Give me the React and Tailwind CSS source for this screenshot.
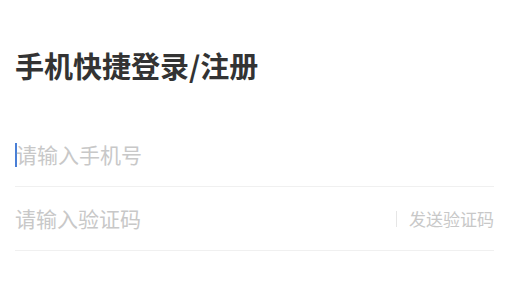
import React from 'react';

const App = () => {
    return (
        <div
            className="w-[511px] h-[284px] bg-white pl-[15px] pr-[17px] overflow-hidden"
            style={{ fontFamily: '"Noto Sans CJK SC", "Noto Sans", sans-serif' }}
        >
            {/* Title */}
            <h1 className="pt-[42px] text-[29px] leading-[46px] font-bold text-[#333333]">
                手机快捷登录/注册
            </h1>

            {/* Phone */}
            <div className="mt-[35px] h-[64px] flex items-center border-b border-[#f0f0f0]">
                <span className="w-[2px] h-[24px] bg-[#4a7fd6] -mr-[1px]" />
                <span className="text-[21px] text-[#c8c8c8]">请输入手机号</span>
            </div>

            {/* Code */}
            <div className="h-[64px] flex items-center border-b border-[#f0f0f0]">
                <span className="flex-1 text-[21px] text-[#c8c8c8]">请输入验证码</span>
                <span className="w-px h-[16px] bg-[#e6e6e6] mr-[12px]" />
                <span className="text-[17px] text-[#c8c8c8]">发送验证码</span>
            </div>
        </div>
    );
};

export default App;
